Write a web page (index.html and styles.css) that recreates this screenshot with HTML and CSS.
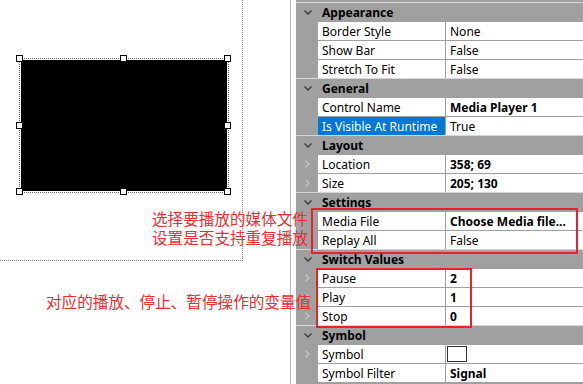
FILE: index.html
```html
<!DOCTYPE html>
<html lang="en">
<head>
  <meta charset="UTF-8">
  <title>Media Player Properties</title>
  <link rel="stylesheet" href="styles.css">
</head>
<body>

  <div class="designer">
    <div class="surface">
      <div class="control">
        <div class="screen"></div>
        <span class="handle h-l h-t"></span>
        <span class="handle h-c h-t"></span>
        <span class="handle h-r h-t"></span>
        <span class="handle h-l h-m"></span>
        <span class="handle h-r h-m"></span>
        <span class="handle h-l h-b"></span>
        <span class="handle h-c h-b"></span>
        <span class="handle h-r h-b"></span>
      </div>
    </div>
  </div>

  <div class="props">
    <div class="group"><span class="gutter"><svg width="8" height="5" viewBox="0 0 8 5"><polyline points="0.5,0.5 4,4 7.5,0.5" /></svg></span><span class="title">Appearance</span></div>
    <div class="row"><span class="gutter"></span><span class="name">Border Style</span><span class="value">None</span></div>
    <div class="row"><span class="gutter"></span><span class="name">Show Bar</span><span class="value">False</span></div>
    <div class="row"><span class="gutter"></span><span class="name">Stretch To Fit</span><span class="value">False</span></div>

    <div class="group"><span class="gutter"><svg width="8" height="5" viewBox="0 0 8 5"><polyline points="0.5,0.5 4,4 7.5,0.5" /></svg></span><span class="title">General</span></div>
    <div class="row"><span class="gutter"></span><span class="name">Control Name</span><span class="value bold">Media Player 1</span></div>
    <div class="row"><span class="gutter"></span><span class="name selected">Is Visible At Runtime</span><span class="value">True</span></div>

    <div class="group"><span class="gutter"><svg width="8" height="5" viewBox="0 0 8 5"><polyline points="0.5,0.5 4,4 7.5,0.5" /></svg></span><span class="title">Layout</span></div>
    <div class="row"><span class="gutter sub"><svg width="5" height="8" viewBox="0 0 5 8"><polyline points="0.5,0.5 4,4 0.5,7.5" /></svg></span><span class="name">Location</span><span class="value bold">358; 69</span></div>
    <div class="row"><span class="gutter sub"><svg width="5" height="8" viewBox="0 0 5 8"><polyline points="0.5,0.5 4,4 0.5,7.5" /></svg></span><span class="name">Size</span><span class="value bold">205; 130</span></div>

    <div class="group"><span class="gutter"><svg width="8" height="5" viewBox="0 0 8 5"><polyline points="0.5,0.5 4,4 7.5,0.5" /></svg></span><span class="title">Settings</span></div>
    <div class="row"><span class="gutter"></span><span class="name">Media File</span><span class="value bold">Choose Media file...</span></div>
    <div class="row"><span class="gutter"></span><span class="name">Replay All</span><span class="value">False</span></div>

    <div class="group"><span class="gutter"><svg width="8" height="5" viewBox="0 0 8 5"><polyline points="0.5,0.5 4,4 7.5,0.5" /></svg></span><span class="title">Switch Values</span></div>
    <div class="row"><span class="gutter sub"><svg width="5" height="8" viewBox="0 0 5 8"><polyline points="0.5,0.5 4,4 0.5,7.5" /></svg></span><span class="name">Pause</span><span class="value bold">2</span></div>
    <div class="row"><span class="gutter sub"><svg width="5" height="8" viewBox="0 0 5 8"><polyline points="0.5,0.5 4,4 0.5,7.5" /></svg></span><span class="name">Play</span><span class="value bold">1</span></div>
    <div class="row"><span class="gutter sub"><svg width="5" height="8" viewBox="0 0 5 8"><polyline points="0.5,0.5 4,4 0.5,7.5" /></svg></span><span class="name">Stop</span><span class="value bold">0</span></div>

    <div class="group"><span class="gutter"><svg width="8" height="5" viewBox="0 0 8 5"><polyline points="0.5,0.5 4,4 7.5,0.5" /></svg></span><span class="title">Symbol</span></div>
    <div class="row"><span class="gutter sub"><svg width="5" height="8" viewBox="0 0 5 8"><polyline points="0.5,0.5 4,4 0.5,7.5" /></svg></span><span class="name">Symbol</span><span class="value swatch-cell"><span class="swatch"></span></span></div>
    <div class="row"><span class="gutter"></span><span class="name">Symbol Filter</span><span class="value bold">Signal</span></div>
  </div>

  <!-- red notes drawn over the screenshot -->
  <div class="mark mark-settings"></div>
  <div class="mark mark-switch"></div>
  <div class="note note-settings">选择要播放的媒体文件<br>设置是否支持重复播放</div>
  <div class="note note-switch">对应的播放、停止、暂停操作的变量值</div>

</body>
</html>
```

FILE: styles.css
```css
body {
  margin: 0;
  width: 583px;
  height: 384px;
  overflow: hidden;
  position: relative;
  display: flex;
  background: #fff;
  font-family: "Noto Sans", "Liberation Sans", sans-serif;
  font-size: 12px;
  color: #000;
}

/* design surface */
.designer {
  width: 290px;
  height: 384px;
  border-right: 1px solid #b9b9b9;
}
.surface {
  position: relative;
  width: 242px;
  height: 260px;
  border-right: 1px dotted #8c8c8c;
  border-bottom: 1px dotted #8c8c8c;
}
.control {
  position: absolute;
  left: 19px;
  top: 58px;
  width: 207px;
  height: 132px;
  border: 1px dotted #6a6a6a;
  padding: 1px 0 0 1px;
  box-sizing: content-box;
}
.screen {
  width: 206px;
  height: 131px;
  background: #000;
}
.handle {
  position: absolute;
  width: 5px;
  height: 5px;
  border: 1px solid #000;
  background: #fff;
}
.h-l { left: -4px; }
.h-c { left: 100px; }
.h-r { left: 204px; }
.h-t { top: -4px; }
.h-m { top: 63px; }
.h-b { top: 129px; }

/* property grid */
.props {
  margin-left: 5px;
  width: 287px;
  height: 384px;
  background: #a0a0a0;
  padding-top: 2px;
  box-sizing: border-box;
}
.row, .group {
  display: grid;
  grid-template-columns: 22px 128px 1fr;
  height: 18px;
  border-top: 1px solid #a0a0a0;
}
.group {
  border-top-color: #d6d6d6;
  font-weight: bold;
}
.group .title, .name, .value {
  box-sizing: border-box;
  height: 18px;
  padding: 1px 0 0 4px;
  line-height: 18px;
  white-space: nowrap;
  overflow: hidden;
}
.group .title {
  grid-column: 2 / 4;
}
.gutter {
  display: flex;
  align-items: center;
  justify-content: center;
  padding-left: 1px;
}
.gutter svg polyline {
  fill: none;
  stroke: #3a3a3a;
  stroke-width: 1.3;
}
.gutter.sub svg polyline {
  stroke: #c4c4c4;
}
.name {
  background: #fff;
  border-right: 1px solid #a0a0a0;
}
.name.selected {
  background: #0078d7;
  color: #fff;
}
.value {
  background: #fff;
}
.value.bold { font-weight: bold; }
.swatch-cell {
  display: flex;
  align-items: center;
  padding: 0;
}
.swatch {
  width: 18px;
  height: 14px;
  border: 1px solid #333;
  margin-left: 1px;
}

/* annotations */
.mark {
  position: absolute;
  border: 2px solid #e8222a;
}
.mark-settings {
  left: 311px;
  top: 208px;
  width: 263px;
  height: 42px;
}
.mark-switch {
  left: 316px;
  top: 268px;
  width: 152px;
  height: 56px;
}
.note {
  position: absolute;
  font-family: "Noto Sans CJK SC", sans-serif;
  font-size: 15.6px;
  line-height: 19px;
  color: #ef2a32;
  white-space: nowrap;
}
.note-settings {
  left: 152px;
  top: 209px;
}
.note-switch {
  left: 46px;
  top: 292px;
}
```
